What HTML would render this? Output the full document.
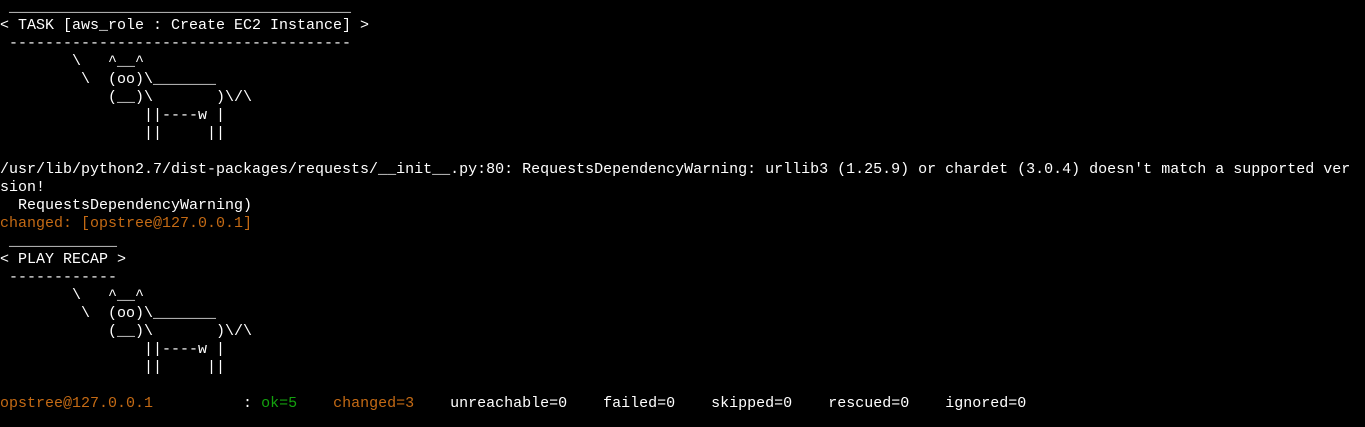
<!DOCTYPE html>
<html><head><meta charset="utf-8"><style>
html,body{margin:0;padding:0;background:#000;width:1365px;height:427px;overflow:hidden}
pre{margin:0;position:absolute;left:0;top:-1px;font-family:"Liberation Mono","DejaVu Sans Mono",monospace;font-size:15px;line-height:18px;color:#fff;white-space:pre}
.o{color:#c46a14}.g{color:#13a10e}
</style></head><body><pre> ______________________________________
&lt; TASK [aws_role : Create EC2 Instance] &gt;
 --------------------------------------
        \   ^__^
         \  (oo)\_______
            (__)\       )\/\
                ||----w |
                ||     ||

/usr/lib/python2.7/dist-packages/requests/__init__.py:80: RequestsDependencyWarning: urllib3 (1.25.9) or chardet (3.0.4) doesn't match a supported ver
sion!
  RequestsDependencyWarning)
<span class="o">changed: [opstree@127.0.0.1]</span>
 ____________
&lt; PLAY RECAP &gt;
 ------------
        \   ^__^
         \  (oo)\_______
            (__)\       )\/\
                ||----w |
                ||     ||

<span class="o">opstree@127.0.0.1</span>          : <span class="g">ok=5   </span> <span class="o">changed=3   </span> unreachable=0    failed=0    skipped=0    rescued=0    ignored=0
</pre></body></html>
